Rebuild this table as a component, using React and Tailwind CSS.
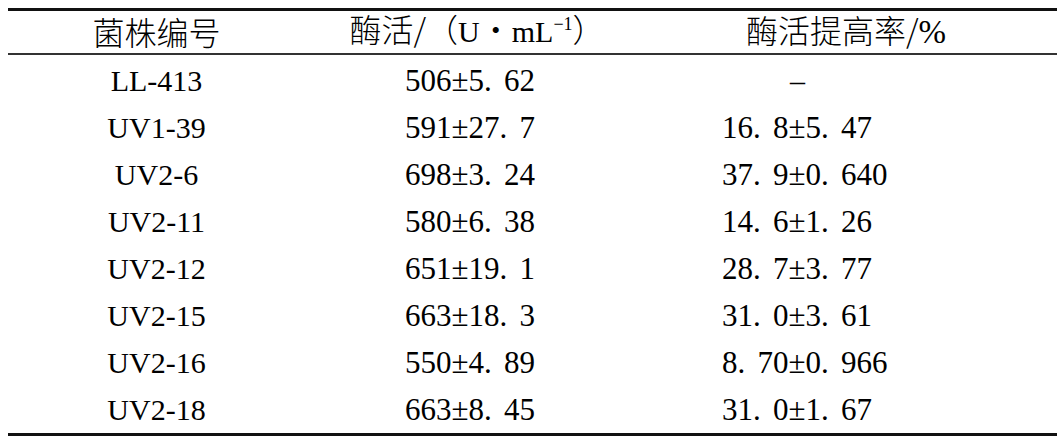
import React from "react";

const rows = [
  ["LL-413", "506±5.62", null],
  ["UV1-39", "591±27.7", "16.8±5.47"],
  ["UV2-6", "698±3.24", "37.9±0.640"],
  ["UV2-11", "580±6.38", "14.6±1.26"],
  ["UV2-12", "651±19.1", "28.7±3.77"],
  ["UV2-15", "663±18.3", "31.0±3.61"],
  ["UV2-16", "550±4.89", "8.70±0.966"],
  ["UV2-18", "663±8.45", "31.0±1.67"],
];

function Num({ s }) {
  const parts = s.split(".");
  const out = [];
  parts.forEach((p, i) => {
    if (i > 0)
      out.push(
        <span key={"d" + i} className="inline-block w-[20px]">
          .
        </span>
      );
    out.push(<span key={"p" + i}>{p}</span>);
  });
  return <span className="whitespace-pre text-[31px]">{out}</span>;
}

export default function App() {
  return (
    <div className="w-[1064px] h-[448px] bg-white pt-[8px] pl-[8px] pr-[7px] text-black font-['Liberation_Serif','Noto_Sans_CJK_SC',serif]">
      <div className="border-t-[3px] border-b-[3px] border-[#111]">
        <div className="h-[44px] flex items-center border-b-2 border-[#333] text-[32px] leading-none">
          <div className="w-[297px] text-center font-['Noto_Sans_CJK_SC',sans-serif] font-light -mt-[3px]">
            菌株编号
          </div>
          <div className="w-[330px] pl-[14px] text-center whitespace-pre -mt-[5px]">
            <span className="font-['Noto_Sans_CJK_SC',sans-serif] font-light">酶活/（</span>
            <span className="text-[30px]">U</span>
            <span className="font-['Noto_Sans_CJK_SC',sans-serif] font-light">・</span>
            <span className="text-[30px]">mL</span>
            <span className="text-[18px] relative -top-[12px]">−1</span>
            <span className="font-['Noto_Sans_CJK_SC',sans-serif] font-light">）</span>
          </div>
          <div className="flex-1 text-center -mt-[3px]">
            <span className="font-['Noto_Sans_CJK_SC',sans-serif] font-light">酶活提高率/</span>
            <span className="text-[33px]">%</span>
          </div>
        </div>
        <div className="pt-[2px]">
          {rows.map((r, i) => (
            <div key={i} className="h-[47px] flex items-center text-[30px] leading-none">
              <div className="w-[297px] text-center">{r[0]}</div>
              <div className="w-[330px] pl-[100px]">
                <Num s={r[1]} />
              </div>
              <div className="flex-1">
                {r[2] ? (
                  <div className="pl-[87px]">
                    <Num s={r[2]} />
                  </div>
                ) : (
                  <div className="pl-[155px]">–</div>
                )}
              </div>
            </div>
          ))}
        </div>
      </div>
    </div>
  );
}
